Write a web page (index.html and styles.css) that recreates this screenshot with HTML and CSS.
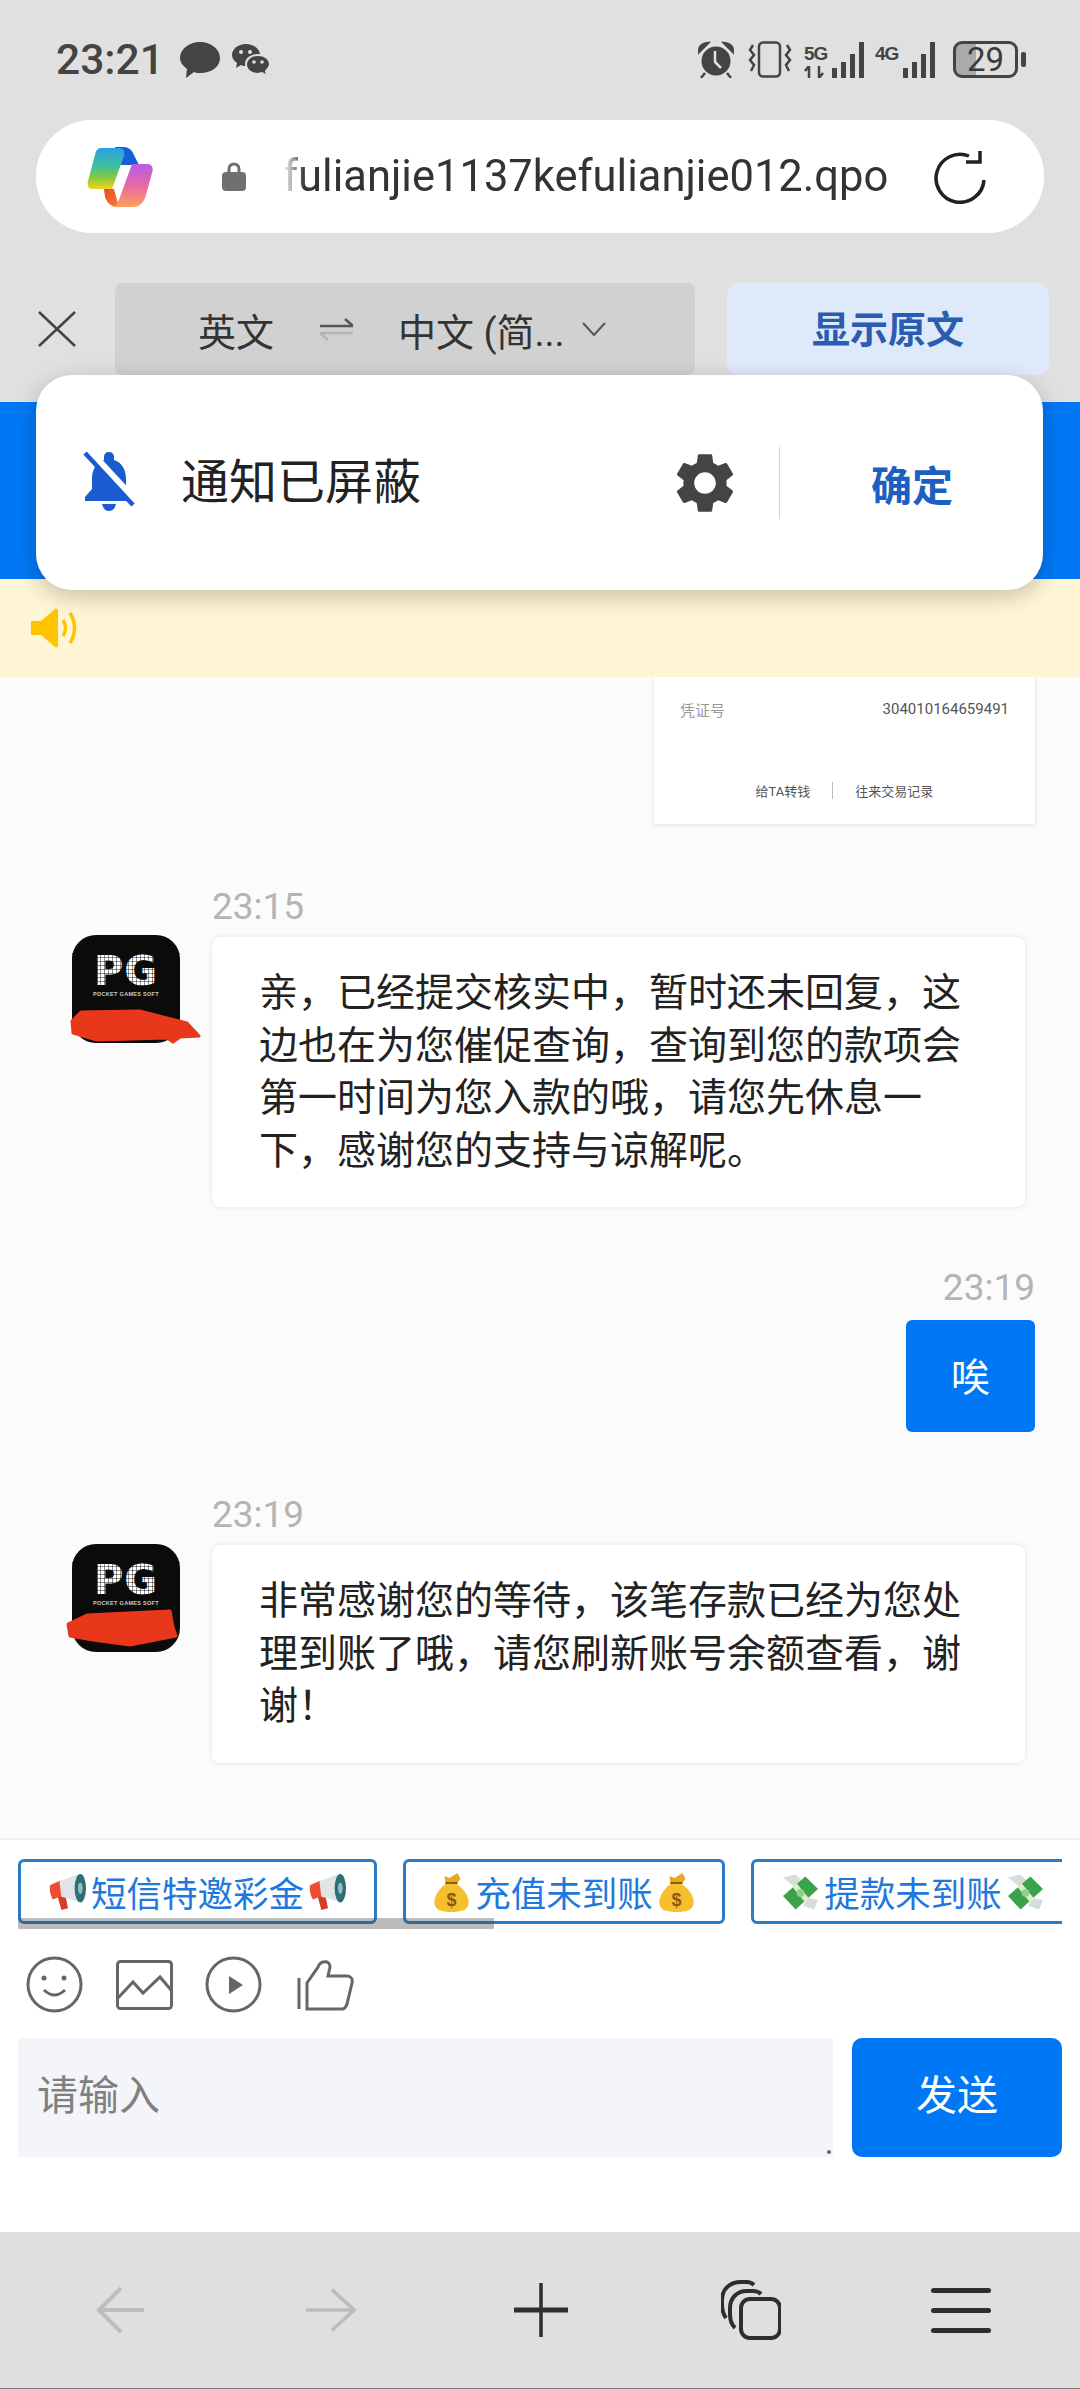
FILE: index.html
```html
<!DOCTYPE html>
<html lang="zh-CN">
<head>
    <meta charset="utf-8">
    <title>在线客服</title>
    <link rel="stylesheet" href="styles.css">
</head>
<body>
<svg class="sprite" xmlns="http://www.w3.org/2000/svg">
    <symbol id="megaphone" viewBox="0 0 39 40">
        <path d="M9 24 L17 22 L20 37 L13 39 Z" fill="#d63c28"/>
        <path d="M1 13 L12 8 L14 24 L4 28 Q0 21 1 13 Z" fill="#ee4d33"/>
        <path d="M11 9 L31 1 L35 31 L13 25 Z" fill="#dfe4e6"/>
        <ellipse cx="33" cy="16" rx="6" ry="15" fill="#2f6f73"/>
        <ellipse cx="33" cy="16" rx="2.5" ry="6" fill="#8fc0c4"/>
    </symbol>
    <symbol id="money-bag" viewBox="0 0 36 40">
        <path d="M12 12 C4 18 0 26 1 32 C2 38 8 40 18 40 C28 40 34 38 35 32 C36 25 31 17 23 12 Z" fill="#f5bf2e"/>
        <path d="M11 4 L16 6 L24 1 L27 7 L23 12 H12 Z" fill="#e8a820"/>
        <path d="M12 11 H24" stroke="#8a5a12" stroke-width="2"/>
        <text x="18" y="34" text-anchor="middle" class="bag-sign">$</text>
    </symbol>
    <symbol id="flying-cash" viewBox="0 0 38 40">
        <path d="M1 5 L14 2 L22 10 L12 14 Z" fill="#d9dcdc"/>
        <path d="M25 26 L37 28 L33 38 L22 34 Z" fill="#d9dcdc"/>
        <path d="M1 24 L24 4 L37 17 L14 38 Z" fill="#3aa24a"/>
        <path d="M11 15 L15 11 L28 27 L24 31 Z" fill="#dff0c8"/>
        <circle cx="19" cy="21" r="4" fill="#8fd08f"/>
    </symbol>
</svg>

<div class="chrome-top">
    <div class="status-bar">
        <div class="status-left">
            <span class="clock">23:21</span>
            <svg class="icon-bubble" viewBox="0 0 40 36"><path d="M20 0 C31 0 40 7 40 16 C40 25 31 31 20 31 C18 31 16 31 14 30 L6 36 L7 27 C3 24 0 20 0 16 C0 7 9 0 20 0 Z" fill="#444"/></svg>
            <svg class="icon-wechat" viewBox="0 0 38 32">
                <path d="M14 0 C22 0 28 5 28 11 C28 17 22 22 14 22 C12 22 11 22 9 21 L4 24 L5 19 C2 17 0 14 0 11 C0 5 6 0 14 0 Z" fill="#444"/>
                <path d="M26 11 C33 11 38 15 38 20 C38 23 36 25 34 27 L35 32 L30 29 C29 29 27 30 26 30 C19 30 14 26 14 20 C14 15 19 11 26 11 Z" fill="#444" stroke="#e0e0e0" stroke-width="2"/>
                <circle cx="9" cy="8" r="2" fill="#e0e0e0"/><circle cx="18" cy="8" r="2" fill="#e0e0e0"/>
                <circle cx="22" cy="18" r="1.8" fill="#e0e0e0"/><circle cx="30" cy="18" r="1.8" fill="#e0e0e0"/>
            </svg>
        </div>
        <div class="status-right">
            <svg class="icon-alarm" viewBox="0 0 36 37">
                <circle cx="18" cy="20" r="14.5" fill="#444"/>
                <path d="M1 11 C1 5 5 2 10 2 Z M35 11 C35 5 31 2 26 2 Z M7 32 L3 37 M29 32 L33 37" fill="#444" stroke="#444" stroke-width="2.5"/>
                <path d="M17 10 V21 L23 27" fill="none" stroke="#e0e0e0" stroke-width="2.5"/>
            </svg>
            <svg class="icon-vibrate" viewBox="0 0 44 37" fill="none" stroke="#444" stroke-width="2.5">
                <rect x="11" y="1.5" width="21" height="34" rx="4"/>
                <path d="M5 4 L2 9 L6 14 L2 19 L6 24 L3 30 M39 4 L42 9 L38 14 L42 19 L38 24 L41 30"/>
            </svg>
            <div class="net">
                <div class="net-label">
                    <span>5G</span>
                    <svg class="net-arrows" viewBox="0 0 24 12"><path d="M5 0 V12 M5 0 L1 5 M15 12 V0 M15 12 L19 7" stroke="#444" stroke-width="2.5" fill="none"/></svg>
                </div>
                <svg class="net-bars" viewBox="0 0 36 36"><path d="M2 26 H7 V36 H2 Z M11 20 H16 V36 H11 Z M20 12 H25 V36 H20 Z M29 0 H34 V36 H29 Z" fill="#444"/></svg>
            </div>
            <div class="net">
                <div class="net-label">
                    <span>4G</span>
                    <svg class="net-arrows" viewBox="0 0 24 12"></svg>
                </div>
                <svg class="net-bars" viewBox="0 0 36 36"><path d="M2 26 H7 V36 H2 Z M11 20 H16 V36 H11 Z M20 12 H25 V36 H20 Z M29 0 H34 V36 H29 Z" fill="#444"/></svg>
            </div>
            <div class="battery">
                <div class="battery-body"><span>29</span></div>
                <div class="battery-tip"></div>
            </div>
        </div>
    </div>

    <div class="url-bar">
        <svg class="copilot" viewBox="0 0 66 60">
            <defs>
                <linearGradient id="cp-left" x1="0" y1="0" x2="0" y2="1">
                    <stop offset="0" stop-color="#2a9fe8"/>
                    <stop offset=".45" stop-color="#3cc09a"/>
                    <stop offset=".75" stop-color="#8fca34"/>
                    <stop offset="1" stop-color="#f6d420"/>
                </linearGradient>
                <linearGradient id="cp-right" x1="0" y1="0" x2="0" y2="1">
                    <stop offset="0" stop-color="#b45ee8"/>
                    <stop offset=".5" stop-color="#ea68a4"/>
                    <stop offset="1" stop-color="#fca05c"/>
                </linearGradient>
                <linearGradient id="cp-fold" x1="0" y1="0" x2="1" y2="1">
                    <stop offset="0" stop-color="#e84a20"/>
                    <stop offset="1" stop-color="#f88038"/>
                </linearGradient>
            </defs>
            <path d="M28 0 H36 C42 0 45 3 47 8 L52 18 H34 Z" fill="#1560d8"/>
            <path d="M14 1 H32 C37 1 38 5 37 9 L25 42 H5 C1 42 0 38 1 34 L8 8 C9 3 11 1 14 1 Z" fill="url(#cp-left)"/>
            <path d="M17 42 H27 L32 60 C24 60 20 56 18 50 Z" fill="url(#cp-fold)"/>
            <path d="M45 17 H60 C65 17 67 21 65 26 L59 48 C57 56 52 60 46 60 H24 C28 60 31 56 33 50 Z" fill="url(#cp-right)"/>
        </svg>
        <svg class="lock" viewBox="0 0 24 29">
            <path d="M7 11 V7 C7 4 9 2 12 2 C15 2 17 4 17 7 V11" fill="none" stroke="#707070" stroke-width="3"/>
            <rect x="0" y="10" width="24" height="19" rx="4" fill="#707070"/>
        </svg>
        <span class="url-text">fulianjie1137kefulianjie012.qpo</span>
        <svg class="reload" viewBox="0 0 55 54" fill="none" stroke="#222" stroke-width="3.5">
            <path d="M36 6 A24 24 0 1 0 51 30"/>
            <path d="M33 12 H47 V1"/>
        </svg>
    </div>

    <div class="translate-bar">
        <svg class="translate-close" viewBox="0 0 38 36"><path d="M1 1 L37 35 M37 1 L1 35" stroke="#444" stroke-width="2.5"/></svg>
        <div class="lang-box">
            <span class="lang-from">英文</span>
            <svg class="lang-swap" viewBox="0 0 33 24">
                <path d="M0 9 H33 L25 2" fill="none" stroke="#555" stroke-width="2.5"/>
                <path d="M33 16 H0 L8 23" fill="none" stroke="#b5b5b5" stroke-width="2.5"/>
            </svg>
            <span class="lang-to">中文 (简...</span>
            <svg class="lang-caret" viewBox="0 0 24 14"><path d="M1 1 L12 13 L23 1" fill="none" stroke="#555" stroke-width="2"/></svg>
        </div>
        <div class="show-original">显示原文</div>
    </div>
</div>

<div class="site-header"></div>
<div class="notice">
    <svg class="notice-horn" viewBox="0 0 49 40">
        <path d="M1 13 H11 L25 1 C27 0 28 1 28 3 V37 C28 39 27 40 25 39 L11 27 H1 Z" fill="#ffc400"/>
        <path d="M33 12 Q38 20 33 28 M40 5 Q49 20 40 35" fill="none" stroke="#ffc400" stroke-width="3.5"/>
    </svg>
</div>

<div class="chat">
    <div class="receipt">
        <div class="receipt-row">
            <span class="receipt-label">凭证号</span>
            <span class="receipt-no">304010164659491</span>
        </div>
        <div class="receipt-links">
            <span>给TA转钱</span>
            <i></i>
            <span>往来交易记录</span>
        </div>
    </div>

    <div class="msg msg-first">
        <div class="avatar">
            <div class="avatar-logo">PG</div>
            <div class="avatar-sub">POCKET GAMES SOFT</div>
            <svg class="scribble" viewBox="0 0 108 108"><path d="M0 86 L9 77 L68 76 L91 82 L115 88 L127 101 L108 102 L101 107 L95 103 L25 105 L1 98 Z"/></svg>
        </div>
        <div class="msg-body">
            <div class="msg-time">23:15</div>
            <div class="bubble">亲，已经提交核实中，暂时还未回复，这边也在为您催促查询，查询到您的款项会第一时间为您入款的哦，请您先休息一下，感谢您的支持与谅解呢。</div>
        </div>
    </div>

    <div class="msg-mine">
        <div class="msg-time">23:19</div>
        <div class="bubble-mine">唉</div>
    </div>

    <div class="msg msg-last">
        <div class="avatar">
            <div class="avatar-logo">PG</div>
            <div class="avatar-sub">POCKET GAMES SOFT</div>
            <svg class="scribble" viewBox="0 0 108 108"><path d="M-4 80 L15 71 L98 67 L101 83 L104 92 L58 101 L21 96 L-2 92 Z"/></svg>
        </div>
        <div class="msg-body">
            <div class="msg-time">23:19</div>
            <div class="bubble">非常感谢您的等待，该笔存款已经为您处理到账了哦，请您刷新账号余额查看，谢谢！</div>
        </div>
    </div>
</div>

<div class="composer">
    <div class="quick-wrap">
        <div class="quick-row">
            <div class="quick quick-sms">
                <svg class="emoji"><use href="#megaphone"/></svg>
                <span>短信特邀彩金</span>
                <svg class="emoji"><use href="#megaphone"/></svg>
            </div>
            <div class="quick quick-topup">
                <svg class="emoji"><use href="#money-bag"/></svg>
                <span>充值未到账</span>
                <svg class="emoji"><use href="#money-bag"/></svg>
            </div>
            <div class="quick quick-withdraw">
                <svg class="emoji"><use href="#flying-cash"/></svg>
                <span>提款未到账</span>
                <svg class="emoji"><use href="#flying-cash"/></svg>
            </div>
        </div>
        <div class="quick-scroll"></div>
    </div>

    <div class="tools">
        <svg class="tool tool-smile" viewBox="0 0 57 57" fill="none">
            <circle cx="28.5" cy="28.5" r="26.5"/>
            <circle cx="18" cy="22" r="2.5" class="tool-fill"/>
            <circle cx="38" cy="22" r="2.5" class="tool-fill"/>
            <path d="M18 34 Q28.5 44 39 34"/>
        </svg>
        <svg class="tool tool-image" viewBox="0 0 57 50" fill="none">
            <rect x="1.5" y="1.5" width="54" height="47" rx="3"/>
            <path d="M2 38 L17 22 L27 33 L44 17 L55 30"/>
        </svg>
        <svg class="tool tool-play" viewBox="0 0 57 57" fill="none">
            <circle cx="28.5" cy="28.5" r="26.5"/>
            <path d="M24 20 L38 29 L24 38 Z" class="tool-fill"/>
        </svg>
        <svg class="tool tool-like" viewBox="0 0 57 52" fill="none">
            <path d="M2 19 V50"/>
            <path d="M10 50 V24 L21 8 C23 2 33 0 33 8 L31 17 H50 C54 17 56 20 55 24 L50 45 C49 48 47 50 45 50 Z"/>
        </svg>
    </div>

    <div class="send-row">
        <div class="input-box">请输入</div>
        <div class="send-btn">发送</div>
    </div>
</div>

<nav class="bottom-nav">
    <div class="nav-slot">
        <svg class="nav-arrow" viewBox="0 0 48 46" fill="none" stroke="#bdbdbd" stroke-width="4"><path d="M2 23 H47 M24 1 L2 23 L24 45"/></svg>
    </div>
    <div class="nav-slot">
        <svg class="nav-arrow" viewBox="0 0 54 46" fill="none" stroke="#bdbdbd" stroke-width="4"><path d="M0 23 H52 M28 1 L52 23 L28 45"/></svg>
    </div>
    <div class="nav-slot">
        <svg class="nav-plus" viewBox="0 0 54 54" fill="none" stroke="#2e2e2e"><path d="M0 27 H54" stroke-width="5"/><path d="M27 0 V54" stroke-width="3.5"/></svg>
    </div>
    <div class="nav-slot">
        <svg class="nav-tabs" viewBox="0 0 60 60" fill="none" stroke="#2e2e2e" stroke-width="4">
            <rect x="20" y="19" width="39" height="39" rx="9"/>
            <path d="M14 48 C10 44 9 40 9 34 V28 C9 18 16 11 26 11 H32 C35 11 38 12 40 14"/>
            <path d="M5 38 C2 34 1 30 1 24 V20 C1 9 9 2 20 2 H26 C29 2 31 3 33 5"/>
        </svg>
    </div>
    <div class="nav-slot">
        <div class="nav-menu"><i></i><i></i><i></i></div>
    </div>
</nav>

<!-- permission toast, floats over the translate bar and site header -->
<div class="toast">
    <svg class="toast-bell" viewBox="0 0 52 59">
        <path d="M26 0 C29 0 31 2 31 5 V8 C40 11 43 19 43 27 V37 L50 45 V49 H2 V45 L9 37 V27 C9 19 12 11 21 8 V5 C21 2 23 0 26 0 Z" fill="#1a5ccf"/>
        <path d="M19 52 H33 C32 56 30 59 26 59 C22 59 20 56 19 52 Z" fill="#1a5ccf"/>
        <path d="M6 0 L56 54" stroke="#fff" stroke-width="9"/>
        <path d="M2 1 L50 53" stroke="#1a5ccf" stroke-width="4.5"/>
    </svg>
    <span class="toast-text">通知已屏蔽</span>
    <svg class="toast-gear" viewBox="0 0 24 24"><path d="M19.14 12.94c.04-.3.06-.61.06-.94 0-.32-.02-.64-.07-.94l2.03-1.58c.18-.14.23-.41.12-.61l-1.92-3.32c-.12-.22-.37-.29-.59-.22l-2.39.96c-.5-.38-1.03-.7-1.62-.94l-.36-2.54c-.04-.24-.24-.41-.48-.41h-3.84c-.24 0-.43.17-.47.41l-.36 2.54c-.59.24-1.13.57-1.62.94l-2.39-.96c-.22-.08-.47 0-.59.22L2.74 8.87c-.12.21-.08.47.12.61l2.03 1.58c-.05.3-.09.63-.09.94s.02.64.07.94l-2.03 1.58c-.18.14-.23.41-.12.61l1.92 3.32c.12.22.37.29.59.22l2.39-.96c.5.38 1.03.7 1.62.94l.36 2.54c.05.24.24.41.48.41h3.84c.24 0 .44-.17.47-.41l.36-2.54c.59-.24 1.13-.56 1.62-.94l2.39.96c.22.08.47 0 .59-.22l1.92-3.32c.12-.22.07-.47-.12-.61l-2.01-1.58zM12 15.6c-1.98 0-3.6-1.62-3.6-3.6s1.62-3.6 3.6-3.6 3.6 1.62 3.6 3.6-1.62 3.6-3.6 3.6z" fill="#444"/></svg>
    <i class="toast-line"></i>
    <span class="toast-ok">确定</span>
</div>
</body>
</html>
```

FILE: styles.css
```css
* {
    box-sizing: border-box
}

html, body {
    margin: 0;
    padding: 0
}

body {
    position: relative;
    width: 1080px;
    height: 2389px;
    display: flex;
    flex-direction: column;
    overflow: hidden;
    background: #fff;
    font-family: Roboto, "Noto Sans CJK SC", sans-serif;
    color: #222
}

.sprite {
    display: none
}

.bag-sign {
    font: bold 18px "Liberation Sans", sans-serif;
    fill: #8a5a12
}

/* browser chrome */
.chrome-top {
    height: 402px;
    background: #e0e0e0;
    flex: none
}

.status-bar {
    height: 120px;
    padding: 40px 54px 0 56px;
    display: flex;
    justify-content: space-between;
    align-items: flex-start
}

.status-left {
    display: flex;
    align-items: center;
    height: 40px;
    color: #444
}

.clock {
    font-size: 42.5px;
    font-weight: 500;
    line-height: 40px;
    width: 124px
}

.icon-bubble {
    width: 40px;
    height: 36px
}

.icon-wechat {
    width: 38px;
    height: 32px;
    margin-left: 12px
}

.status-right {
    display: flex;
    align-items: center;
    height: 38px
}

.icon-alarm {
    width: 36px;
    height: 37px
}

.icon-vibrate {
    width: 44px;
    height: 37px;
    margin-left: 14px
}

.net {
    display: flex;
    align-items: flex-end;
    height: 38px;
    margin-left: 12px
}

.net + .net {
    margin-left: 9px
}

.net-label {
    width: 25px;
    display: flex;
    flex-direction: column
}

.net-label span {
    font: 700 19px/24px "Liberation Sans", sans-serif;
    letter-spacing: -1px;
    color: #444
}

.net-arrows {
    width: 24px;
    height: 12px
}

.net-bars {
    width: 36px;
    height: 36px;
    margin-left: 1px
}

.battery {
    display: flex;
    align-items: center;
    margin-left: 16px
}

.battery-body {
    width: 65px;
    height: 37px;
    border: 3px solid #444;
    border-radius: 9px;
    background: linear-gradient(to right, #aaa 34%, transparent 34%);
    display: flex;
    align-items: center;
    justify-content: center
}

.battery-body span {
    font-size: 33px;
    line-height: 31px;
    color: #3a3a3a
}

.battery-tip {
    width: 5px;
    height: 15px;
    margin-left: 3px;
    border-radius: 2px;
    background: #444
}

.url-bar {
    height: 113px;
    margin: 0 36px 0 36px;
    padding-left: 51px;
    background: #fff;
    border-radius: 56px;
    display: flex;
    align-items: center
}

.copilot {
    width: 66px;
    height: 60px
}

.lock {
    width: 24px;
    height: 29px;
    margin-left: 69px
}

.url-text {
    width: 610px;
    margin-left: 37px;
    font-size: 43.5px;
    color: #333;
    white-space: nowrap;
    -webkit-mask-image: linear-gradient(to right, transparent, #000 22px);
    mask-image: linear-gradient(to right, transparent, #000 22px)
}

.reload {
    width: 55px;
    height: 54px;
    margin-left: 40px
}

.translate-bar {
    height: 92px;
    margin-top: 50px;
    padding-left: 38px;
    display: flex;
    align-items: center
}

.translate-close {
    width: 38px;
    height: 36px
}

.lang-box {
    width: 580px;
    height: 92px;
    margin-left: 39px;
    padding-left: 83px;
    background: #d1d1d1;
    border-radius: 8px;
    display: flex;
    align-items: center;
    font-size: 38px;
    color: #333
}

.lang-swap {
    width: 33px;
    height: 24px;
    margin-left: 46px
}

.lang-to {
    margin-left: 45px;
    white-space: nowrap
}

.lang-caret {
    width: 24px;
    height: 14px;
    margin-left: 17px
}

.show-original {
    width: 322px;
    height: 92px;
    margin-left: 32px;
    background: #deeafb;
    border-radius: 12px;
    font-size: 38px;
    font-weight: 700;
    line-height: 95px;
    text-align: center;
    color: #2a5db0
}

/* site */
.site-header {
    height: 177px;
    flex: none;
    background: #0078f5
}

.notice {
    height: 98px;
    flex: none;
    padding: 29px 0 0 30px;
    background: #fdf5d3
}

.notice-horn {
    display: block;
    width: 49px;
    height: 40px
}

.chat {
    flex: 1;
    min-height: 0;
    overflow: hidden;
    background: #fbfbfc;
    padding-right: 45px
}

.receipt {
    width: 381px;
    height: 147px;
    margin-left: 654px;
    padding: 20px 26px 0;
    background: #fff;
    box-shadow: 0 1px 4px rgba(0, 0, 0, .12)
}

.receipt-row {
    display: flex;
    justify-content: space-between;
    align-items: center;
    height: 24px
}

.receipt-label {
    font-size: 15px;
    color: #999
}

.receipt-no {
    font-size: 15px;
    color: #555
}

.receipt-links {
    display: flex;
    justify-content: center;
    align-items: center;
    gap: 22px;
    height: 24px;
    margin-top: 57px;
    font-size: 13px;
    color: #555
}

.receipt-links i {
    width: 1px;
    height: 17px;
    background: #bbb
}

.msg {
    display: flex
}

.msg-first {
    margin-top: 63px
}

.msg-last {
    margin-top: 63px
}

.avatar {
    position: relative;
    width: 108px;
    height: 108px;
    margin: 48px 32px 0 72px;
    padding-top: 18px;
    flex: none;
    border-radius: 24px;
    background: #0b0b0b;
    text-align: center
}

.msg-last .avatar {
    margin-top: 49px
}

.avatar-logo {
    position: relative;
    height: 36px;
    font: 700 40px/36px "DejaVu Sans", sans-serif;
    letter-spacing: 1px;
    color: #fff
}

/* thin grid over the letters gives the logo its dotted look */
.avatar-logo::after {
    content: "";
    position: absolute;
    inset: 0;
    background:
        repeating-linear-gradient(to right, rgba(11, 11, 11, .45) 0 1px, transparent 1px 4px),
        repeating-linear-gradient(to bottom, rgba(11, 11, 11, .45) 0 1px, transparent 1px 4px)
}

.avatar-sub {
    font: 700 5.5px/10px "Liberation Sans", sans-serif;
    letter-spacing: .3px;
    color: #ccc;
    white-space: nowrap
}

.scribble {
    position: absolute;
    left: 0;
    top: 0;
    width: 108px;
    height: 108px;
    overflow: visible;
    fill: #e8371a;
    stroke: #e8371a;
    stroke-width: 3;
    stroke-linejoin: round
}

.msg-body {
    width: 813px;
    flex: none
}

.msg-time {
    font-size: 37px;
    line-height: 40px;
    color: #b4b4b4
}

.msg-body .msg-time {
    margin-bottom: 10px
}

.bubble {
    padding: 30px 60px 30px 47px;
    font-size: 39px;
    line-height: 52.5px;
    color: #222;
    background: #fff;
    border-radius: 8px;
    box-shadow: 0 0 5px rgba(0, 0, 0, .1)
}

.msg-mine {
    margin-top: 61px;
    display: flex;
    flex-direction: column;
    align-items: flex-end
}

.msg-mine .msg-time {
    margin-bottom: 12px
}

.bubble-mine {
    width: 129px;
    height: 112px;
    border-radius: 6px;
    background: #0078f5;
    color: #fff;
    font-size: 39px;
    line-height: 116px;
    text-align: center
}

/* input area */
.composer {
    flex: none;
    height: 394px;
    border-top: 2px solid #eee;
    padding: 19px 18px 0;
    background: #fff
}

.quick-wrap {
    position: relative;
    height: 65px
}

.quick-row {
    display: flex;
    gap: 26px;
    overflow: hidden;
    height: 65px
}

.quick {
    flex: none;
    height: 65px;
    border: 3px solid #2a7cc8;
    border-radius: 6px;
    display: flex;
    align-items: center;
    justify-content: center;
    gap: 5px;
    font-size: 35.5px;
    color: #1f78dc;
    white-space: nowrap
}

.quick-sms {
    width: 359px
}

.quick-topup {
    width: 322px
}

.quick-withdraw {
    width: 324px
}

.emoji {
    width: 37px;
    height: 40px;
    flex: none
}

.quick-scroll {
    position: absolute;
    left: 0;
    top: 59px;
    width: 476px;
    height: 11px;
    background: rgba(70, 70, 70, .36)
}

.tools {
    height: 57px;
    margin: 32px 0 25px;
    display: flex;
    align-items: center
}

.tool {
    flex: none;
    stroke: #666;
    stroke-width: 3
}

.tool-fill {
    fill: #666;
    stroke: none
}

.tool-smile {
    width: 57px;
    height: 57px;
    margin-left: 8px
}

.tool-image {
    width: 57px;
    height: 50px;
    margin-left: 33px
}

.tool-play {
    width: 57px;
    height: 57px;
    margin-left: 32px
}

.tool-like {
    width: 57px;
    height: 52px;
    margin-left: 35px
}

.send-row {
    display: flex;
    height: 119px;
    gap: 19px
}

.input-box {
    position: relative;
    width: 815px;
    padding-left: 19px;
    background: #f4f5f8;
    font-size: 41px;
    line-height: 116px;
    color: #808080
}

/* resize grip in the corner of the field */
.input-box::after {
    content: "";
    position: absolute;
    right: 2px;
    bottom: 3px;
    width: 4px;
    height: 4px;
    background: #666;
    border-radius: 2px
}

.send-btn {
    width: 210px;
    background: #0078f5;
    border-radius: 10px;
    color: #fff;
    font-size: 41px;
    line-height: 116px;
    text-align: center
}

/* browser toolbar */
.bottom-nav {
    flex: none;
    height: 157px;
    padding-left: 16px;
    background: #dfdfdf;
    border-bottom: 1px solid #777;
    display: flex;
    align-items: center
}

.nav-slot {
    width: 210px;
    display: flex;
    justify-content: center;
    align-items: center
}

.nav-arrow {
    width: 50px;
    height: 46px
}

.nav-plus {
    width: 54px;
    height: 54px
}

.nav-tabs {
    width: 60px;
    height: 60px
}

.nav-menu {
    width: 60px;
    display: flex;
    flex-direction: column;
    gap: 15px
}

.nav-menu i {
    height: 5px;
    border-radius: 3px;
    background: #2e2e2e
}

/* toast */
.toast {
    position: absolute;
    left: 36px;
    top: 375px;
    width: 1007px;
    height: 215px;
    padding: 0 0 0 47px;
    background: #fff;
    border-radius: 36px;
    box-shadow: 0 6px 22px rgba(0, 0, 0, .22);
    display: flex;
    align-items: center
}

.toast-bell {
    width: 52px;
    height: 59px;
    flex: none;
    overflow: hidden;
    margin-top: -3px
}

.toast-text {
    margin-left: 46px;
    width: 488px;
    font-size: 48px;
    line-height: 60px;
    color: #222
}

.toast-gear {
    width: 72px;
    height: 72px;
    flex: none
}

.toast-line {
    width: 1px;
    height: 72px;
    margin-left: 38px;
    background: #d5d5d5
}

.toast-ok {
    margin-left: 91px;
    font-size: 41px;
    font-weight: 700;
    color: #1c5fc0
}
```
